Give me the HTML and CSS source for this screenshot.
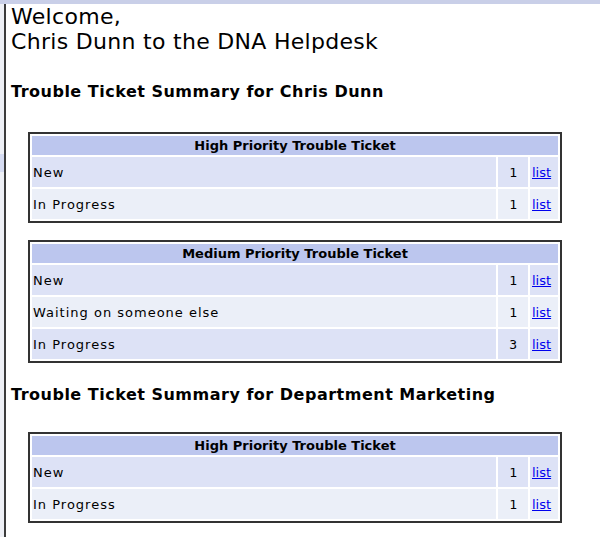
FILE: index.html
```html
<!DOCTYPE html>
<html>
<head>
<meta charset="utf-8">
<link rel="stylesheet" href="styles.css">
</head>
<body>
<div class="topband"></div>
<div class="shell">
  <div class="gutter"><div class="gutter-mark"></div></div>
  <div class="page">
    <h1 class="welcome">Welcome,<br>Chris Dunn to the DNA Helpdesk</h1>

    <h2 class="summary">Trouble Ticket Summary for Chris Dunn</h2>

    <table class="tickets">
      <tr><th colspan="3">High Priority Trouble Ticket</th></tr>
      <tr class="odd"><td class="label">New</td><td class="num">1</td><td class="lnk"><a href="#">list</a></td></tr>
      <tr class="even"><td class="label">In Progress</td><td class="num">1</td><td class="lnk"><a href="#">list</a></td></tr>
    </table>

    <table class="tickets">
      <tr><th colspan="3">Medium Priority Trouble Ticket</th></tr>
      <tr class="odd"><td class="label">New</td><td class="num">1</td><td class="lnk"><a href="#">list</a></td></tr>
      <tr class="even"><td class="label">Waiting on someone else</td><td class="num">1</td><td class="lnk"><a href="#">list</a></td></tr>
      <tr class="odd"><td class="label">In Progress</td><td class="num">3</td><td class="lnk"><a href="#">list</a></td></tr>
    </table>

    <h2 class="summary dept">Trouble Ticket Summary for Department Marketing</h2>

    <table class="tickets">
      <tr><th colspan="3">High Priority Trouble Ticket</th></tr>
      <tr class="odd"><td class="label">New</td><td class="num">1</td><td class="lnk"><a href="#">list</a></td></tr>
      <tr class="even"><td class="label">In Progress</td><td class="num">1</td><td class="lnk"><a href="#">list</a></td></tr>
    </table>
  </div>
</div>
</body>
</html>
```

FILE: styles.css
```css
html, body {
  margin: 0;
  padding: 0;
  background: #ffffff;
  font-family: "DejaVu Sans", Verdana, sans-serif;
  color: #000;
}

.topband {
  height: 4px;
  background: #c9cfe8;
}

.shell {
  display: flex;
  min-height: 533px;
}

.gutter {
  width: 4px;
  background: #eef0f6;
  padding-top: 150px;
}

.gutter-mark {
  height: 18px;
  background: #d6dcf2;
}

.page {
  flex: 1;
  border-left: 2px solid #3c3c3c;
  padding-left: 5px;
}

.welcome {
  margin: 0;
  font-weight: normal;
  font-size: 22px;
  line-height: 25px;
  letter-spacing: 0.3px;
  font-family: "DejaVu Sans", Verdana, sans-serif;
}

.summary {
  margin: 28px 0 0 0;
  font-size: 16px;
  line-height: 20px;
  letter-spacing: 0.5px;
  font-weight: bold;
}

.summary.dept {
  margin-top: 22px;
}

.tickets {
  margin: 30px 0 0 17px;
  width: 534px;
  border: 2px solid #333;
  border-spacing: 2px;
  font-size: 13px;
}

.tickets + .tickets {
  margin-top: 17px;
}

.summary.dept + .tickets {
  margin-top: 27px;
}

.tickets th {
  background: #bcc6ee;
  height: 19px;
  padding: 0;
  font-size: 13px;
  font-weight: bold;
  text-align: center;
}

.tickets td {
  height: 30px;
  padding: 0 0 0 1px;
}

.tickets td.label {
  letter-spacing: 1px;
}

.tickets tr.odd td { background: #dde2f6; }
.tickets tr.even td { background: #ebeff8; }

.tickets td.num {
  width: 18px;
  text-align: right;
  padding-right: 11px;
  font-family: "DejaVu Sans Mono", monospace;
  font-size: 13px;
}

.tickets td.lnk {
  width: 26px;
  padding-left: 2px;
  font-size: 13px;
}

.tickets a {
  color: #0000ee;
}
```
